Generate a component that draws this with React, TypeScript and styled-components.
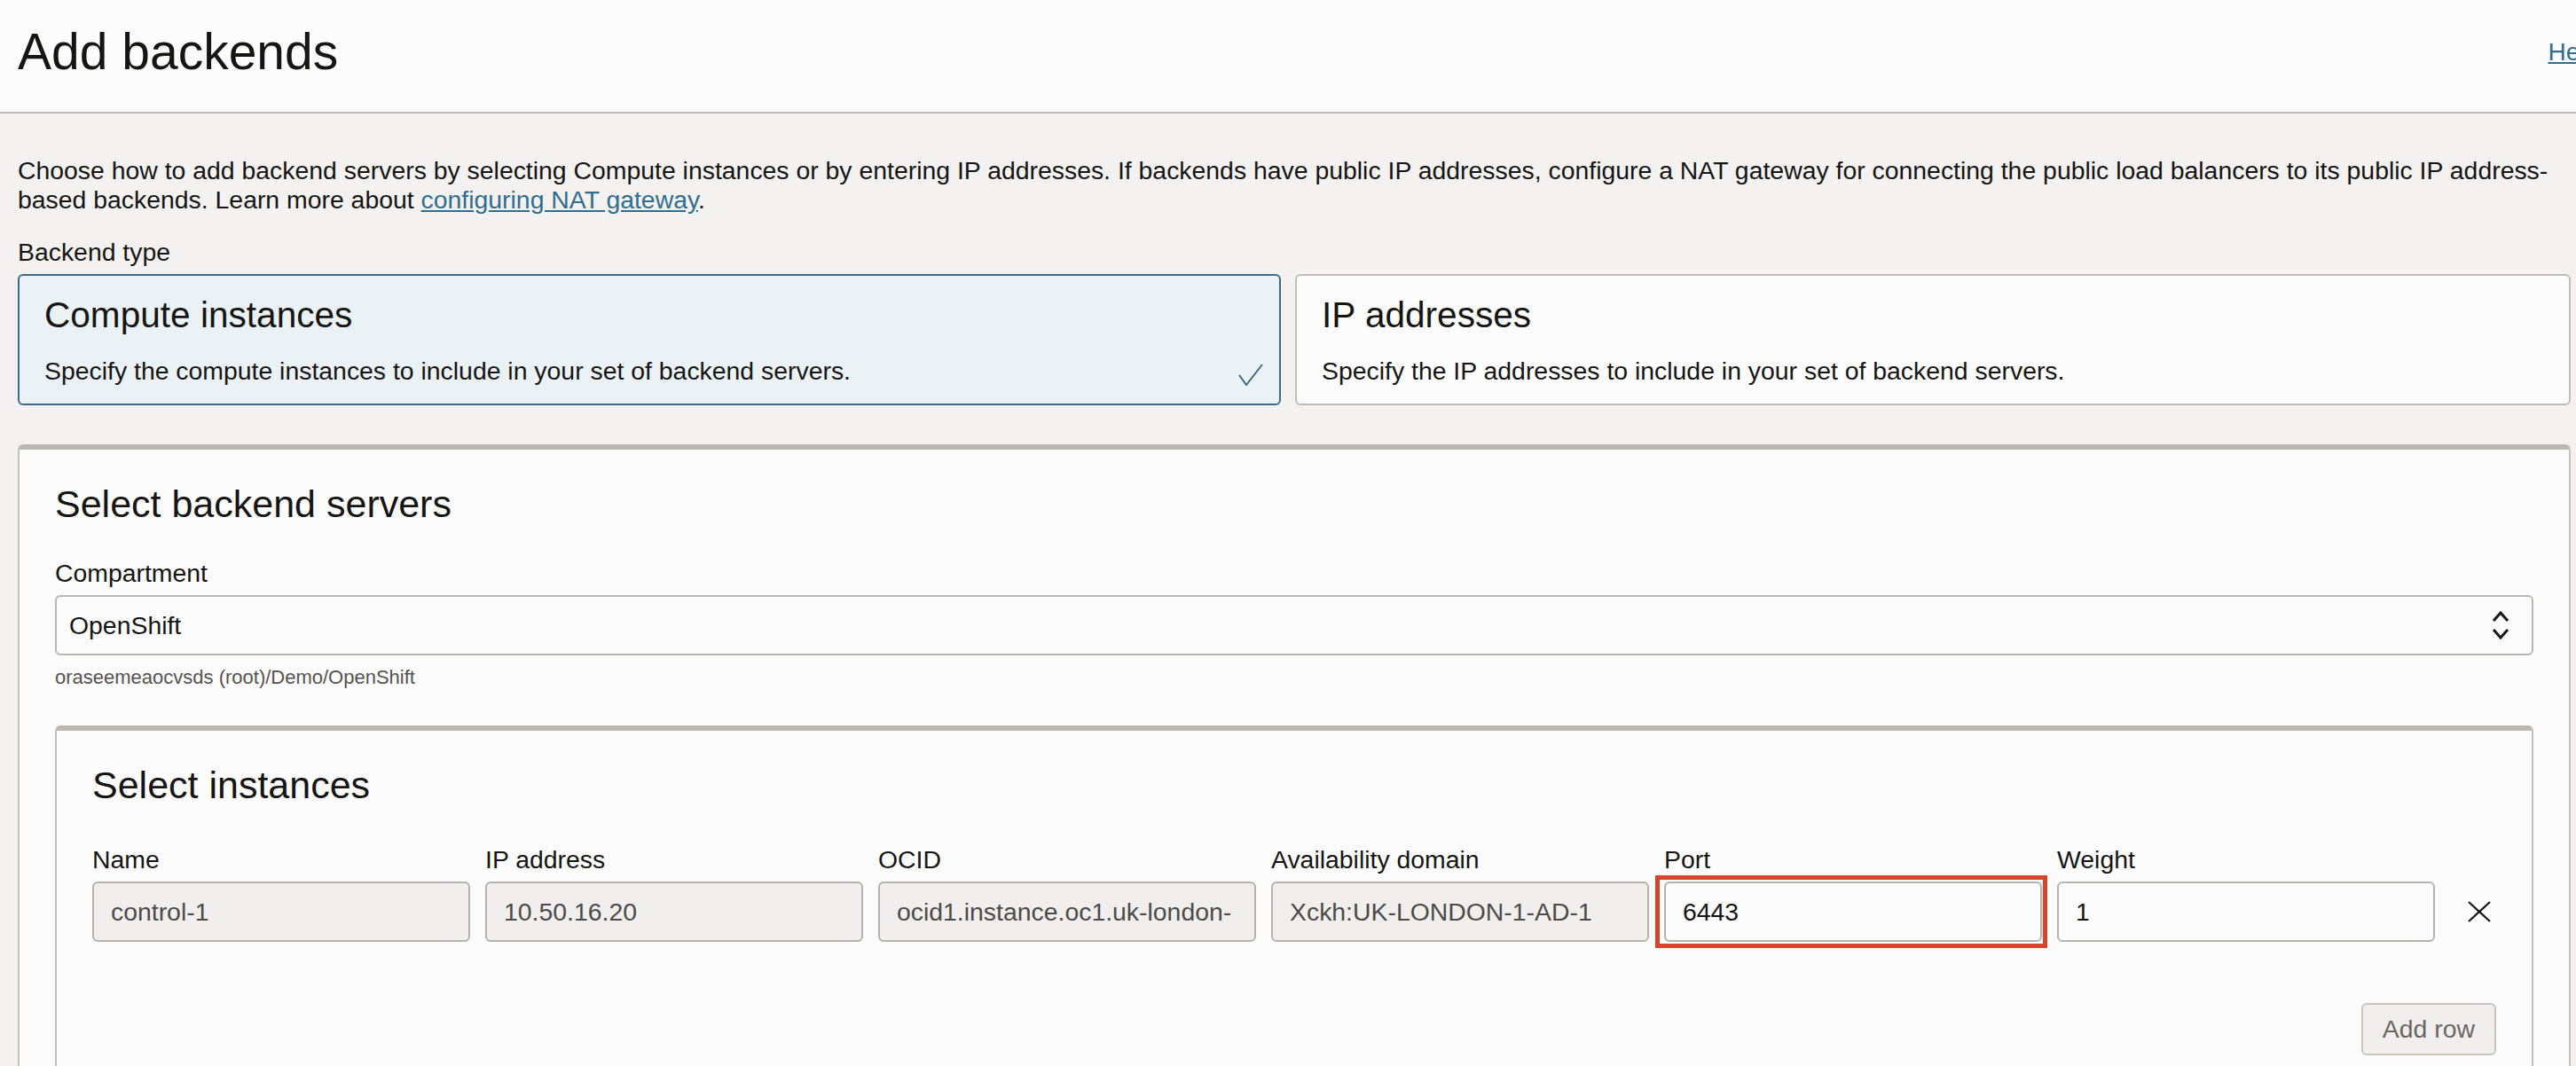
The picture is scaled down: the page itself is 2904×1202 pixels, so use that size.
import styled, { createGlobalStyle } from 'styled-components';

const GlobalStyle = createGlobalStyle`
  html, body {
    margin: 0;
    padding: 0;
    background: #f3f2f1;
    overflow: hidden;
  }
  body {
    font-family: "Liberation Sans", Arial, sans-serif;
    color: #161513;
  }
  * { box-sizing: border-box; }
`

const Page = styled.div`
  width: 2950px;
  min-height: 1202px;
  background: #f3f2f1;
`

const Header = styled.header`
  display: flex;
  justify-content: space-between;
  align-items: flex-start;
  height: 128px;
  padding: 25px 20px 0;
  background: #fcfcfc;
  border-bottom: 2px solid #bfbbb6;
`

const Title = styled.h1`
  margin: 0;
  font-size: 57px;
  font-weight: 400;
  line-height: 67px;
`

const HelpLink = styled.a`
  font-size: 28px;
  line-height: 67px;
  color: #316d8f;
  text-decoration: underline;
`

const Main = styled.main`
  padding: 48px 52px 0 20px;
`

const Intro = styled.p`
  margin: 0;
  font-size: 28.4px;
  line-height: 33px;
  a {
    color: #316d8f;
    text-decoration: underline;
  }
`

const FieldLabel = styled.div<{ $top?: number }>`
  margin-top: ${p => p.$top ?? 0}px;
  margin-bottom: 8px;
  font-size: 28.4px;
  line-height: 34px;
`

const CardGrid = styled.div`
  display: grid;
  grid-template-columns: 1424px 1fr;
  gap: 16px;
`

const TypeCard = styled.div<{ $selected?: boolean }>`
  display: flex;
  flex-direction: column;
  height: 148px;
  padding: 20px 17px 20px 28px;
  border-radius: 6px;
  border: 2px solid ${p => p.$selected ? '#3b6a8a' : '#c0bcb7'};
  background: ${p => p.$selected ? '#eaf2f5' : '#fcfcfc'};
`

const CardTitle = styled.div`
  font-size: 40.6px;
  line-height: 48px;
`

const CardFooter = styled.div`
  display: flex;
  justify-content: space-between;
  align-items: flex-end;
  margin-top: 22px;
`

const CardText = styled.div`
  font-size: 28.4px;
  line-height: 34px;
`

const Panel = styled.section<{ $top: number; $padBottom?: number }>`
  margin-top: ${p => p.$top}px;
  padding: 36px 40px ${p => p.$padBottom ?? 0}px;
  background: #fcfcfc;
  border: 2px solid #c4c0bb;
  border-top: 6px solid #bdb7b1;
  border-radius: 6px 6px 0 0;
`

const SectionTitle = styled.h2`
  margin: 0;
  font-size: 43px;
  font-weight: 400;
  line-height: 50px;
`

const SelectBox = styled.div`
  display: flex;
  justify-content: space-between;
  align-items: center;
  height: 68px;
  padding: 0 24px 0 14px;
  border: 2px solid #b9b6b2;
  border-radius: 6px;
  background: #fcfcfc;
  font-size: 28.4px;
`

const Helper = styled.div`
  margin-top: 12px;
  font-size: 22px;
  line-height: 26px;
  color: #56534f;
`

const InstanceGrid = styled.div`
  display: grid;
  grid-template-columns: repeat(6, 1fr) 52px;
  column-gap: 17px;
  row-gap: 8px;
  margin-top: 42px;
`

const ColLabel = styled.div`
  font-size: 28.4px;
  line-height: 34px;
`

const TextInput = styled.input<{ $readonly?: boolean }>`
  width: 100%;
  height: 68px;
  padding: 0 19px;
  border: 2px solid #b6b3af;
  border-radius: 6px;
  background: ${p => p.$readonly ? '#f1efed' : '#fcfcfc'};
  color: ${p => p.$readonly ? '#4d4b48' : '#161513'};
  font-family: inherit;
  font-size: 28.4px;
  outline: none;
`

const Highlighted = styled.div`
  position: relative;
  &::after {
    content: '';
    position: absolute;
    left: -10px;
    right: -6px;
    top: -7px;
    bottom: -7px;
    border: 5px solid #d6452e;
    pointer-events: none;
  }
`

const RemoveCell = styled.div`
  display: flex;
  align-items: center;
  justify-content: flex-end;
  padding-right: 6px;
`

const Actions = styled.div`
  display: flex;
  justify-content: flex-end;
  margin-top: 69px;
`

const Button = styled.button`
  height: 59px;
  padding: 0 22px;
  border: 2px solid #c9c5c0;
  border-radius: 6px;
  background: #f1efed;
  color: #6a6763;
  font-family: inherit;
  font-size: 28.4px;
`

const columns = [
  { label: 'Name', value: 'control-1', readonly: true },
  { label: 'IP address', value: '10.50.16.20', readonly: true },
  { label: 'OCID', value: 'ocid1.instance.oc1.uk-london-', readonly: true },
  { label: 'Availability domain', value: 'Xckh:UK-LONDON-1-AD-1', readonly: true },
  { label: 'Port', value: '6443', readonly: false },
  { label: 'Weight', value: '1', readonly: false },
]

function Check() {
  return (
    <svg width="30" height="26" viewBox="0 0 30 26">
      <polyline points="2,14 10,25 28,2" fill="none" stroke="#3b6a8a" strokeWidth="2" />
    </svg>
  )
}

function Chevrons() {
  return (
    <svg width="22" height="32" viewBox="0 0 22 32">
      <polyline points="3,11 11,2 19,11" fill="none" stroke="#161513" strokeWidth="3" />
      <polyline points="3,21 11,30 19,21" fill="none" stroke="#161513" strokeWidth="3" />
    </svg>
  )
}

function Close() {
  return (
    <svg width="26" height="24" viewBox="0 0 26 24">
      <line x1="1" y1="1" x2="25" y2="23" stroke="#161513" strokeWidth="2.2" />
      <line x1="25" y1="1" x2="1" y2="23" stroke="#161513" strokeWidth="2.2" />
    </svg>
  )
}

export default function App() {
  return (
    <Page>
      <GlobalStyle />
      <Header>
        <Title>Add backends</Title>
        <HelpLink href="#">Help</HelpLink>
      </Header>
      <Main>
        <Intro>
          Choose how to add backend servers by selecting Compute instances or by entering IP addresses. If backends have public IP addresses, configure a NAT gateway for connecting the public load balancers to its public IP address-based backends. Learn more about <a href="#">configuring NAT gateway</a>.
        </Intro>

        <FieldLabel $top={25}>Backend type</FieldLabel>
        <CardGrid>
          <TypeCard $selected>
            <CardTitle>Compute instances</CardTitle>
            <CardFooter>
              <CardText>Specify the compute instances to include in your set of backend servers.</CardText>
              <Check />
            </CardFooter>
          </TypeCard>
          <TypeCard>
            <CardTitle>IP addresses</CardTitle>
            <CardFooter>
              <CardText>Specify the IP addresses to include in your set of backend servers.</CardText>
            </CardFooter>
          </TypeCard>
        </CardGrid>

        <Panel $top={44}>
          <SectionTitle>Select backend servers</SectionTitle>
          <FieldLabel $top={36}>Compartment</FieldLabel>
          <SelectBox>
            <span>OpenShift</span>
            <Chevrons />
          </SelectBox>
          <Helper>oraseemeaocvsds (root)/Demo/OpenShift</Helper>

          <Panel $top={41} $padBottom={20}>
            <SectionTitle>Select instances</SectionTitle>
            <InstanceGrid>
              {columns.map(c => <ColLabel key={c.label}>{c.label}</ColLabel>)}
              <div />
              {columns.map(c =>
                c.label === 'Port' ? (
                  <Highlighted key={c.label}>
                    <TextInput defaultValue={c.value} />
                  </Highlighted>
                ) : (
                  <TextInput key={c.label} $readonly={c.readonly} readOnly={c.readonly} defaultValue={c.value} />
                )
              )}
              <RemoveCell><Close /></RemoveCell>
            </InstanceGrid>
            <Actions>
              <Button>Add row</Button>
            </Actions>
          </Panel>
        </Panel>
      </Main>
    </Page>
  )
}
